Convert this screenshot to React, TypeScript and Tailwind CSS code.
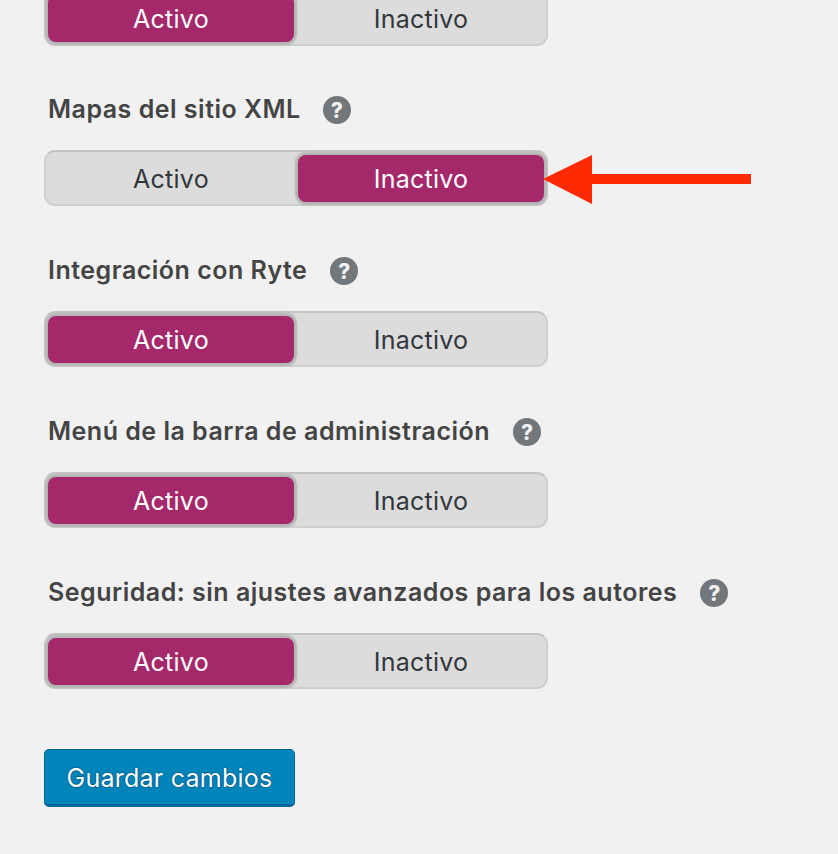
const font = "font-['Inter','Liberation_Sans',sans-serif]";

function Help() {
  return (
    <span className="flex h-7 w-7 shrink-0 items-center justify-center rounded-full bg-[#72777c] text-[21px] leading-none font-extrabold tracking-normal text-[#f1f1f1]">
      ?
    </span>
  );
}

function Toggle({ active }: { active: boolean }) {
  const on =
    "bg-[#a4286a] text-white rounded-[8px] shadow-[0_0_2px_3px_#b4b4b4]";
  const off = "text-[#32373c]";
  return (
    <div className="flex h-[56px] w-[504px] items-stretch rounded-[11px] border-2 border-[#cfcfcf] border-t-[#c4c4c4] bg-[#dcdcdc] pt-[3px] pr-[2px] pb-[2px] pl-[2px] tracking-[0.25px]">
      <div className={`flex w-[246px] items-center justify-center pt-[3px] ${active ? on : off}`}>Activo</div>
      <div className={`ml-[4px] flex w-[246px] items-center justify-center pt-[3px] ${active ? off : on}`}>Inactivo</div>
    </div>
  );
}

function Arrow() {
  return (
    <svg className="absolute left-[499px] top-[58px]" width="208" height="51" viewBox="0 0 208 51">
      <path d="M0 25 L49 1 V20 H208 V30 H49 V50 Z" fill="#ff2a00" />
    </svg>
  );
}

const rows = [
  { label: "Mapas del sitio XML", active: false, gap: "gap-[22px]" },
  { label: "Integración con Ryte", active: true, gap: "gap-[23px]" },
  { label: "Menú de la barra de administración", active: true, gap: "gap-[23px]" },
  { label: "Seguridad: sin ajustes avanzados para los autores", active: true, gap: "gap-[23px]" },
];

export default function App() {
  return (
    <div className={`h-[854px] w-[838px] overflow-hidden bg-[#f1f1f1] pl-[44px] text-[25px] ${font}`}>
      <div className="-mt-[10px]">
        <Toggle active />
      </div>
      {rows.map((r, i) => (
        <div key={i} className={`relative ${i === 0 ? "mt-[50px]" : "mt-[51px]"}`}>
          <div className={`flex h-[28px] items-center pl-[4px] font-semibold tracking-[0.5px] text-[#444444] ${r.gap}`}>
            <span>{r.label}</span>
            <Help />
          </div>
          <div className="mt-[26px]">
            <Toggle active={r.active} />
          </div>
          {i === 0 && <Arrow />}
        </div>
      ))}
      <button className="mt-[60px] h-[58px] w-[251px] rounded-[5px] border border-b-[3px] border-[#006799] bg-[#0085ba] pt-[3px] text-center tracking-[0.25px] text-white [text-shadow:0_-1px_1px_#006799,1px_0_1px_#006799,0_1px_1px_#006799,-1px_0_1px_#006799]">
        Guardar cambios
      </button>
    </div>
  );
}
